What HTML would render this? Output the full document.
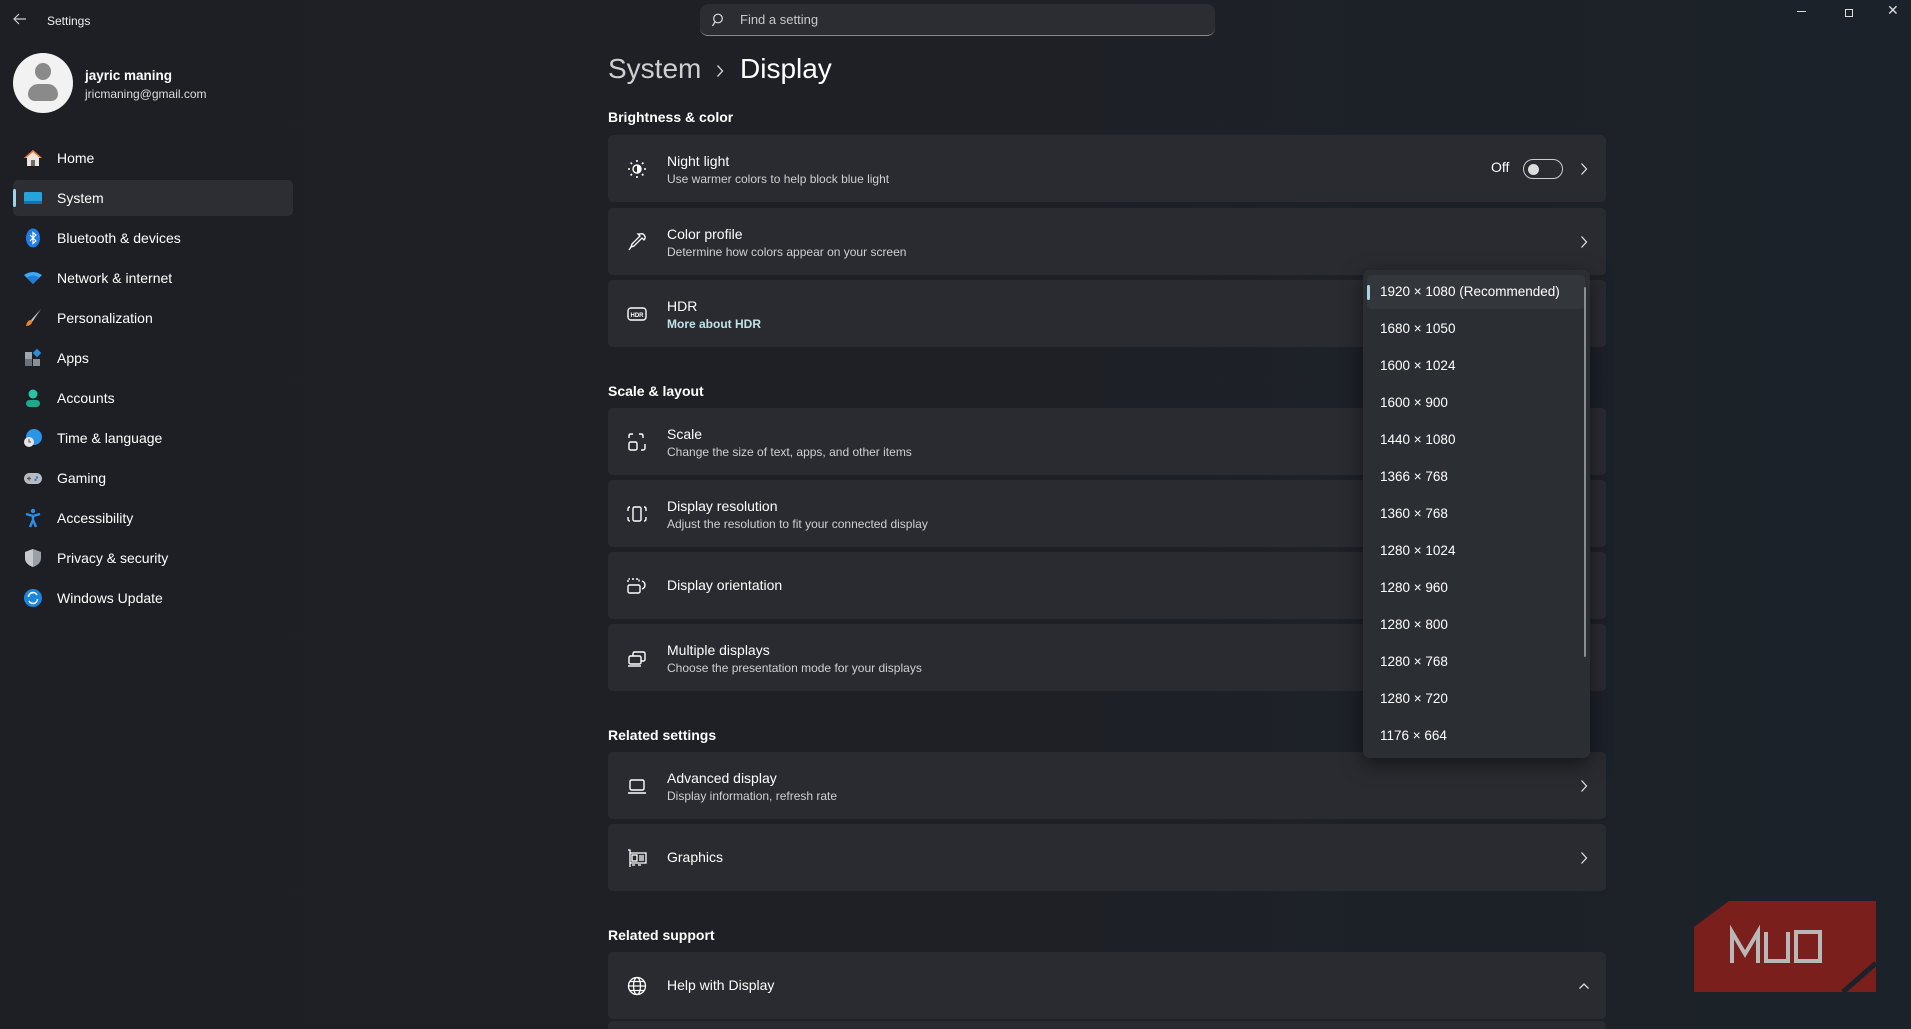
<!DOCTYPE html>
<html style="width:1911px;height:1029px;overflow:hidden"><head><meta charset="utf-8"><style>
*{margin:0;padding:0;box-sizing:border-box}
body{width:1911px;height:1029px;overflow:hidden;font-family:"Liberation Sans",sans-serif;color:#fff;background:linear-gradient(90deg,#1e1f25 0%,#1f2026 50%,#1c2128 75%,#1b2229 100%);position:relative}
.a{position:absolute}
.nav{position:absolute;left:13px;width:280px;height:36px;display:flex;align-items:center;font-size:14px;color:#fff}
.nav .ic{position:absolute;left:10px;top:8px;width:20px;height:20px}
.nav span{position:absolute;left:44px}
.card{position:absolute;left:608px;width:998px;height:67px;background:#2a2b30;border-radius:5px}
.card .t{position:absolute;left:59px;top:18px;font-size:14px;color:#fff}
.card .s{position:absolute;left:59px;top:37px;font-size:12px;color:#d0d0d0}
.card .one{top:25px}
.card svg.i{position:absolute;left:19px;top:24px}
.chev{position:absolute;left:972px;top:27px}
.h{position:absolute;left:608px;font-size:14px;font-weight:bold;color:#fff}
.dd{position:absolute;left:1363px;top:270px;width:227px;height:488px;background:#2b2e33;border-radius:7px;box-shadow:0 6px 20px rgba(0,0,0,.5)}
.dd div{position:absolute;left:17px;font-size:13.5px;color:#fff}
</style></head><body>
<!-- title bar -->
<svg class="a" style="left:13px;top:13px" width="14" height="12" viewBox="0 0 14 12"><path d="M13 6H1.5M6 1L1 6l5 5" stroke="#ccc" stroke-width="1.2" fill="none"/></svg>
<div class="a" style="left:47px;top:14px;font-size:12px;color:#eee">Settings</div>
<div class="a" style="left:700px;top:4px;width:515px;height:32px;background:#2c2d32;border-radius:8px;border-bottom:1px solid #8a8a8a"></div>
<svg class="a" style="left:712px;top:13px" width="14" height="14" viewBox="0 0 14 14"><circle cx="6" cy="5.5" r="4.3" stroke="#ddd" stroke-width="1.2" fill="none"/><path d="M3 9l-2.5 4" stroke="#ddd" stroke-width="1.2"/></svg>
<div class="a" style="left:740px;top:12px;font-size:13px;color:#c8c8c8">Find a setting</div>
<div class="a" style="left:1797px;top:11px;width:9px;height:1px;background:#ddd"></div>
<div class="a" style="left:1845px;top:9px;width:8px;height:8px;border:1px solid #ddd"></div>
<div class="a" style="left:1887px;top:2px;font-size:14px;color:#ddd">✕</div>

<!-- profile -->
<div class="a" style="left:13px;top:53px;width:60px;height:60px;border-radius:50%;background:#f2f2f2"></div>
<div class="a" style="left:35px;top:63px;width:16px;height:17px;border-radius:50%;background:#8a8a8a"></div>
<div class="a" style="left:28px;top:84px;width:30px;height:17px;border-radius:12px 12px 8px 8px;background:#8a8a8a"></div>
<div class="a" style="left:85px;top:68px;font-size:13.5px;font-weight:bold">jayric maning</div>
<div class="a" style="left:85px;top:87px;font-size:12px;color:#ddd">jricmaning@gmail.com</div>

<!-- nav -->
<div class="nav" style="top:140px"><svg class="ic" viewBox="0 0 20 20"><path d="M10 2L1 10h3v8h12v-8h3z" fill="#e9e4dc"/><path d="M10 2L1 10h2l7-6 7 6h2z" fill="#e8772e"/><rect x="8" y="12" width="4" height="6" fill="#6b6b6b"/></svg><span>Home</span></div>
<div class="nav" style="top:180px;background:#2d2e33;border-radius:5px"><div class="a" style="left:0;top:9px;width:3px;height:18px;background:#9fd3e6;border-radius:2px"></div><svg class="ic" viewBox="0 0 20 20"><rect x="1" y="4" width="18" height="12" rx="1" fill="#27a3dc"/><rect x="1" y="13" width="18" height="3" fill="#1a6fa8"/></svg><span>System</span></div>
<div class="nav" style="top:220px"><svg class="ic" viewBox="0 0 20 20"><ellipse cx="10" cy="10" rx="7" ry="9.5" fill="#1f7de8"/><path d="M7 7l6 6-3 2.5V4.5L13 7l-6 6" stroke="#fff" stroke-width="1.2" fill="none"/></svg><span>Bluetooth &amp; devices</span></div>
<div class="nav" style="top:260px"><svg class="ic" viewBox="0 0 20 20"><path d="M1 7q9-6 18 0l-9 9z" fill="#3fa9f5"/><path d="M4 9.5q6-4 12 0l-6 6.5z" fill="#1e7fd9"/></svg><span>Network &amp; internet</span></div>
<div class="nav" style="top:300px"><svg class="ic" viewBox="0 0 20 20"><path d="M18 1L8 12l1.5 1.5z" fill="#c9c9c9"/><path d="M8 12q-4 0-5 6 5 0 6.5-4.5z" fill="#e8862e"/></svg><span>Personalization</span></div>
<div class="nav" style="top:340px"><svg class="ic" viewBox="0 0 20 20"><rect x="2" y="4" width="7" height="7" fill="#a0a6ad"/><rect x="2" y="11" width="7" height="7" fill="#6c737b"/><rect x="10" y="11" width="7" height="7" fill="#8a9097"/><rect x="11" y="2" width="6" height="6" fill="#2b8fe0" transform="rotate(45 14 5)"/></svg><span>Apps</span></div>
<div class="nav" style="top:380px"><svg class="ic" viewBox="0 0 20 20"><circle cx="10" cy="6" r="4.5" fill="#2ac2a3"/><rect x="3" y="12" width="14" height="7" rx="3.5" fill="#1ea88c"/></svg><span>Accounts</span></div>
<div class="nav" style="top:420px"><svg class="ic" viewBox="0 0 20 20"><circle cx="11" cy="9" r="8" fill="#2b95e8"/><circle cx="6" cy="14" r="5" fill="#e6e6e6"/><path d="M6 11v3h2" stroke="#555" fill="none"/></svg><span>Time &amp; language</span></div>
<div class="nav" style="top:460px"><svg class="ic" viewBox="0 0 20 20"><rect x="1" y="5" width="18" height="11" rx="5.5" fill="#b8bcc2"/><path d="M4 10.5h4M6 8.5v4" stroke="#555" stroke-width="1.2"/><circle cx="14" cy="9.5" r="1.2" fill="#2b7fd9"/><circle cx="12.5" cy="12" r="1.2" fill="#2b7fd9"/></svg><span>Gaming</span></div>
<div class="nav" style="top:500px"><svg class="ic" viewBox="0 0 20 20"><circle cx="10" cy="3" r="2.2" fill="#2b8fe8"/><path d="M3 6l7 2 7-2M10 8v4l-3 7M10 12l3 7" stroke="#2b8fe8" stroke-width="2.4" fill="none"/></svg><span>Accessibility</span></div>
<div class="nav" style="top:540px"><svg class="ic" viewBox="0 0 20 20"><path d="M10 1l8 3v6q0 6-8 9-8-3-8-9V4z" fill="#9aa0a7"/><path d="M10 1v18q-8-3-8-9V4z" fill="#c5c9ce"/></svg><span>Privacy &amp; security</span></div>
<div class="nav" style="top:580px"><svg class="ic" viewBox="0 0 20 20"><circle cx="10" cy="10" r="9" fill="#1a86e0"/><path d="M5.5 9a4.5 4.5 0 0 1 8.5-2M14.5 11a4.5 4.5 0 0 1-8.5 2" stroke="#fff" stroke-width="1.6" fill="none"/></svg><span>Windows Update</span></div>

<!-- header -->
<div class="a" style="left:608px;top:53px;font-size:28px;color:#cfcfcf">System</div>
<svg class="a" style="left:716px;top:64px" width="8" height="14" viewBox="0 0 8 14"><path d="M1.5 1.5l5 5.5-5 5.5" stroke="#ccc" stroke-width="1.4" fill="none"/></svg>
<div class="a" style="left:740px;top:53px;font-size:28px;color:#fff">Display</div>

<div class="h" style="top:109px">Brightness &amp; color</div>
<div class="card" style="top:135px"><svg class="i" width="20" height="20" viewBox="0 0 20 20"><circle cx="10" cy="10" r="4" stroke="#fff" stroke-width="1.4" fill="none"/><path d="M10 6a4 4 0 0 1 0 8z" fill="#fff"/><g stroke="#fff" stroke-width="1.6"><path d="M10 1v2M10 17v2M1 10h2M17 10h2M3.6 3.6l1.4 1.4M15 15l1.4 1.4M3.6 16.4L5 15M15 5l1.4-1.4"/></g></svg><div class="t">Night light</div><div class="s">Use warmer colors to help block blue light</div>
<div class="a" style="left:883px;top:24px;font-size:14px">Off</div>
<div class="a" style="left:915px;top:24px;width:40px;height:20px;border:1px solid #ccc;border-radius:10px"></div><div class="a" style="left:920px;top:29px;width:11px;height:11px;border-radius:50%;background:#ddd"></div>
<svg class="chev" width="8" height="14" viewBox="0 0 8 14"><path d="M1.5 1.5l5 5.5-5 5.5" stroke="#ddd" stroke-width="1.3" fill="none"/></svg></div>
<div class="card" style="top:208px"><svg class="i" width="20" height="20" viewBox="0 0 20 20"><path d="M13 2q3-1 4.5 1.5T17 8l-2-2-8 8-3 1 1-3 8-8-2-2z" stroke="#fff" stroke-width="1.3" fill="none"/><path d="M4 15l-2 3" stroke="#fff" stroke-width="1.3"/></svg><div class="t">Color profile</div><div class="s">Determine how colors appear on your screen</div><svg class="chev" width="8" height="14" viewBox="0 0 8 14"><path d="M1.5 1.5l5 5.5-5 5.5" stroke="#ddd" stroke-width="1.3" fill="none"/></svg></div>
<div class="card" style="top:280px"><svg class="i" width="20" height="20" viewBox="0 0 20 20"><rect x="1" y="4" width="18" height="12" rx="3" stroke="#fff" stroke-width="1.4" fill="none"/><text x="10" y="13" font-size="6" font-weight="bold" fill="#fff" text-anchor="middle" font-family="Liberation Sans">HDR</text></svg><div class="t">HDR</div><div class="s" style="color:#bfe3ea;font-weight:bold">More about HDR</div></div>

<div class="h" style="top:383px">Scale &amp; layout</div>
<div class="card" style="top:408px"><svg class="i" width="20" height="20" viewBox="0 0 20 20" fill="none" stroke="#fff" stroke-width="1.4"><rect x="2" y="10" width="8" height="8" rx="1.5"/><path d="M2 6V4q0-2 2-2h2M12 2h2q2 0 2 2v2M18 12v4q0 2-2 2h-2"/></svg><div class="t">Scale</div><div class="s">Change the size of text, apps, and other items</div></div>
<div class="card" style="top:480px"><svg class="i" width="20" height="20" viewBox="0 0 20 20" fill="none" stroke="#fff" stroke-width="1.4"><rect x="6" y="3" width="8" height="14" rx="1.5"/><path d="M3 3q-2 0-2 2v2M1 13v2q0 2 2 2M17 3q2 0 2 2v2M19 13v2q0 2-2 2"/></svg><div class="t">Display resolution</div><div class="s">Adjust the resolution to fit your connected display</div></div>
<div class="card" style="top:552px"><svg class="i" width="20" height="20" viewBox="0 0 20 20" fill="none" stroke="#fff" stroke-width="1.4"><rect x="1" y="9" width="12" height="8" rx="1.5"/><path d="M1 6V3h2M5 3h2M9 3h3v3" stroke-dasharray="2 1.5"/><path d="M15 5q3 1 3 4t-3 4"/></svg><div class="t one">Display orientation</div></div>
<div class="card" style="top:624px"><svg class="i" width="20" height="20" viewBox="0 0 20 20" fill="none" stroke="#fff" stroke-width="1.4"><rect x="6" y="4" width="12" height="9" rx="1.5"/><rect x="2" y="8" width="12" height="8" rx="1.5" fill="#2a2b30"/><path d="M1 18h13"/></svg><div class="t">Multiple displays</div><div class="s">Choose the presentation mode for your displays</div></div>

<div class="h" style="top:727px">Related settings</div>
<div class="card" style="top:752px"><svg class="i" width="20" height="20" viewBox="0 0 20 20" fill="none" stroke="#fff" stroke-width="1.4"><rect x="3" y="4" width="14" height="10" rx="1.5"/><path d="M1 17h18"/></svg><div class="t">Advanced display</div><div class="s">Display information, refresh rate</div><svg class="chev" width="8" height="14" viewBox="0 0 8 14"><path d="M1.5 1.5l5 5.5-5 5.5" stroke="#ddd" stroke-width="1.3" fill="none"/></svg></div>
<div class="card" style="top:824px"><svg class="i" width="20" height="20" viewBox="0 0 20 20" fill="none" stroke="#fff" stroke-width="1.3"><path d="M1 2h2v17M3 5h16v10H3"/><rect x="5" y="7" width="5" height="6"/><path d="M12 8h5M12 10h5M12 12h5M5 17h3M11 17h3"/></svg><div class="t one">Graphics</div><svg class="chev" width="8" height="14" viewBox="0 0 8 14"><path d="M1.5 1.5l5 5.5-5 5.5" stroke="#ddd" stroke-width="1.3" fill="none"/></svg></div>

<div class="h" style="top:927px">Related support</div>
<div class="card" style="top:952px"><svg class="i" width="20" height="20" viewBox="0 0 20 20" fill="none" stroke="#fff" stroke-width="1.3"><circle cx="10" cy="10" r="8.5"/><ellipse cx="10" cy="10" rx="3.5" ry="8.5"/><path d="M1.5 10h17M3 5.5h14M3 14.5h14"/></svg><div class="t one">Help with Display</div><svg class="chev" style="left:970px;top:30px" width="12" height="8" viewBox="0 0 12 8"><path d="M1.5 6.5L6 2l4.5 4.5" stroke="#ddd" stroke-width="1.3" fill="none"/></svg></div>
<div class="card" style="top:1021px;height:8px;border-radius:5px 5px 0 0"></div>

<!-- dropdown -->
<div class="dd">
<div style="left:4px;top:5px;width:218px;height:34px;background:#33363b;border-radius:4px"></div>
<div style="left:4px;top:15px;width:3px;height:15px;background:#a9d4e3;border-radius:2px"></div>
<div style="top:14px">1920 × 1080 (Recommended)</div>
<div style="top:51px">1680 × 1050</div>
<div style="top:88px">1600 × 1024</div>
<div style="top:125px">1600 × 900</div>
<div style="top:162px">1440 × 1080</div>
<div style="top:199px">1366 × 768</div>
<div style="top:236px">1360 × 768</div>
<div style="top:273px">1280 × 1024</div>
<div style="top:310px">1280 × 960</div>
<div style="top:347px">1280 × 800</div>
<div style="top:384px">1280 × 768</div>
<div style="top:421px">1280 × 720</div>
<div style="top:458px">1176 × 664</div>
<div style="left:221px;top:17px;width:2px;height:370px;background:#8a8d91;border-radius:1px"></div>
</div>

<!-- MUO logo -->
<svg class="a" style="left:1694px;top:901px" width="182" height="91" viewBox="0 0 182 91"><path d="M35 0H182V91H0V26z" fill="#7a1f1c"/><path d="M182 62L149 91" stroke="#1b2229" stroke-width="5"/><g fill="none" stroke="#b8b8b8" stroke-width="4"><path d="M38 62V31l13 22 13-22v31"/><path d="M72 31v29h22V31"/><rect x="102" y="31" width="24" height="29"/></g></svg>
</body></html>
